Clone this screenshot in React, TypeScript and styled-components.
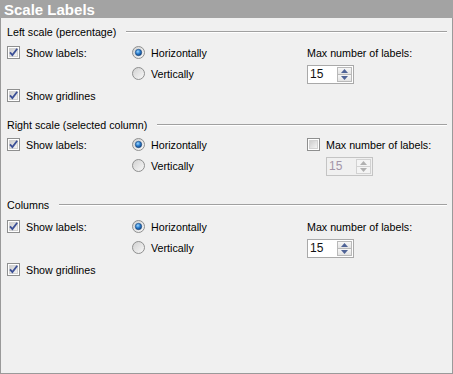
import * as React from 'react';
import styled, {createGlobalStyle} from 'styled-components';

const GlobalStyle = createGlobalStyle`
  html, body {
    margin: 0;
    padding: 0;
    background: #f0f0f0;
  }
  body {
    font-family: "Liberation Sans", Arial, sans-serif;
  }
`;

const Panel = styled.div`
  box-sizing: border-box;
  width: 453px;
  height: 374px;
  border: 1px solid #9a9a9a;
  background: #f0f0f0;
  display: flex;
  flex-direction: column;
`;

const Header = styled.div`
  height: 17px;
  background: #a3a3a3;
  color: #fff;
  font-weight: bold;
  font-size: 15px;
  line-height: 17px;
  padding-left: 4px;
  margin: -1px -1px 0;
  padding-top: 1px;
`;

const Body = styled.div`
  padding: 6px 5px 0 6px;
  font-size: 10.7px;
  color: #000;
`;

const GroupTitle = styled.div<{$top: number}>`
  display: flex;
  align-items: center;
  gap: 10px;
  height: 16px;
  margin-top: ${({$top}) => $top}px;
`;

const Rule = styled.div`
  flex: 1;
  border-top: 1px solid #a0a0a0;
  border-bottom: 1px solid #ffffff;
`;

const Grid = styled.div<{$top: number; $rows: string}>`
  display: grid;
  grid-template-columns: 125px 175px 1fr;
  grid-template-rows: ${({$rows}) => $rows};
  align-items: center;
  margin-top: ${({$top}) => $top}px;
`;

const Option = styled.label`
  display: flex;
  align-items: center;
  gap: 6px;
  white-space: nowrap;
`;

const Caption = styled.span`
  white-space: nowrap;
`;

const SpinBox = styled.div<{$disabled?: boolean; $indent?: number}>`
  box-sizing: border-box;
  width: 47px;
  height: 19px;
  align-self: end;
  margin-left: ${({$indent}) => $indent || 0}px;
  display: flex;
  border: 1px solid ${({$disabled}) => ($disabled ? '#c4c4c4' : '#a9a9a9')};
  background: ${({$disabled}) => ($disabled ? '#f0f0f0' : '#ffffff')};
`;

const SpinValue = styled.div<{$disabled?: boolean}>`
  flex: 1;
  font-size: 12px;
  line-height: 17px;
  padding-left: 2px;
  color: ${({$disabled}) => ($disabled ? '#a394a8' : '#111')};
`;

const SpinButtons = styled.div`
  width: 15px;
  display: flex;
  flex-direction: column;
  padding: 1px 1px 1px 0;
`;

const SpinButton = styled.div<{$disabled?: boolean}>`
  flex: 1;
  display: flex;
  align-items: center;
  justify-content: center;
  border: 1px solid ${({$disabled}) => ($disabled ? '#d2d2d2' : '#b9b9b9')};
  background: ${({$disabled}) =>
    $disabled ? '#f4f4f4' : 'linear-gradient(#f7f7f7, #e3e3e3)'};
  & + & {
    margin-top: -1px;
  }
`;

const CheckBox = ({checked, disabled}: {checked?: boolean; disabled?: boolean}) => {
  const id = React.useId();
  return (
    <svg width="13" height="13" viewBox="0 0 13 13">
      <defs>
        <linearGradient id={id} x1="0" y1="0" x2="1" y2="1">
          <stop offset="0" stopColor="#cbcbcb" />
          <stop offset="1" stopColor="#f6f6f6" />
        </linearGradient>
      </defs>
      <rect x="0.5" y="0.5" width="12" height="12" fill="#fff" stroke={disabled ? '#b5b5b5' : '#8e8f8f'} />
      <rect x="2.5" y="2.5" width="8" height="8" fill={`url(#${id})`} stroke="#d2d2d2" />
      {checked && (
        <path d="M3 6.3 L5.4 9 L10.2 2.8" fill="none" stroke="#3b4f96" strokeWidth="1.8" />
      )}
    </svg>
  );
};

const Radio = ({checked}: {checked?: boolean}) => {
  const id = React.useId();
  return (
    <svg width="13" height="13" viewBox="0 0 13 13">
      <defs>
        <linearGradient id={`${id}b`} x1="0" y1="0" x2="1" y2="1">
          <stop offset="0" stopColor="#cfcfcf" />
          <stop offset="1" stopColor="#fafafa" />
        </linearGradient>
        <radialGradient id={`${id}d`} cx="0.4" cy="0.35" r="0.7">
          <stop offset="0" stopColor="#9fd8ff" />
          <stop offset="0.5" stopColor="#2b7fd0" />
          <stop offset="1" stopColor="#0c3c7a" />
        </radialGradient>
      </defs>
      <circle cx="6.5" cy="6.5" r="6" fill={`url(#${id}b)`} stroke="#8e8f8f" />
      {checked && <circle cx="6.5" cy="6.5" r="3.2" fill={`url(#${id}d)`} stroke="#1c467a" strokeWidth="0.6" />}
    </svg>
  );
};

const Arrow = ({up, disabled}: {up?: boolean; disabled?: boolean}) => (
  <svg width="7" height="4" viewBox="0 0 7 4">
    <path
      d={up ? 'M0 4 L3.5 0 L7 4 Z' : 'M0 0 L3.5 4 L7 0 Z'}
      fill={disabled ? '#b0b0b0' : '#4f6396'}
    />
  </svg>
);

const Spinner = ({value, disabled, indent}: {value: number; disabled?: boolean; indent?: number}) => (
  <SpinBox $disabled={disabled} $indent={indent}>
    <SpinValue $disabled={disabled}>{value}</SpinValue>
    <SpinButtons>
      <SpinButton $disabled={disabled}>
        <Arrow up disabled={disabled} />
      </SpinButton>
      <SpinButton $disabled={disabled}>
        <Arrow disabled={disabled} />
      </SpinButton>
    </SpinButtons>
  </SpinBox>
);

interface SectionProps {
  title: string;
  titleTop: number;
  gridTop: number;
  gridlines?: boolean;
  maxEnabled?: boolean;
}

const Section = ({title, titleTop, gridTop, gridlines, maxEnabled = true}: SectionProps) => (
  <>
    <GroupTitle $top={titleTop}>
      <Caption>{title}</Caption>
      <Rule />
    </GroupTitle>
    <Grid $top={gridTop} $rows={gridlines ? '21px 21px 23px' : '21px 21px'}>
      <Option>
        <CheckBox checked />
        Show labels:
      </Option>
      <Option>
        <Radio checked />
        Horizontally
      </Option>
      {maxEnabled ? (
        <Caption>Max number of labels:</Caption>
      ) : (
        <Option>
          <CheckBox />
          Max number of labels:
        </Option>
      )}
      <span />
      <Option>
        <Radio />
        Vertically
      </Option>
      <Spinner value={15} disabled={!maxEnabled} indent={maxEnabled ? 0 : 19} />
      {gridlines && (
        <Option>
          <CheckBox checked />
          Show gridlines
        </Option>
      )}
    </Grid>
  </>
);

export default function App() {
  return (
    <>
      <GlobalStyle />
      <Panel>
        <Header>Scale Labels</Header>
        <Body>
          <Section title="Left scale (percentage)" titleTop={0} gridTop={2} gridlines />
          <Section title="Right scale (selected column)" titleTop={10} gridTop={1} maxEnabled={false} />
          <Section title="Columns" titleTop={21} gridTop={3} gridlines />
        </Body>
      </Panel>
    </>
  );
}
